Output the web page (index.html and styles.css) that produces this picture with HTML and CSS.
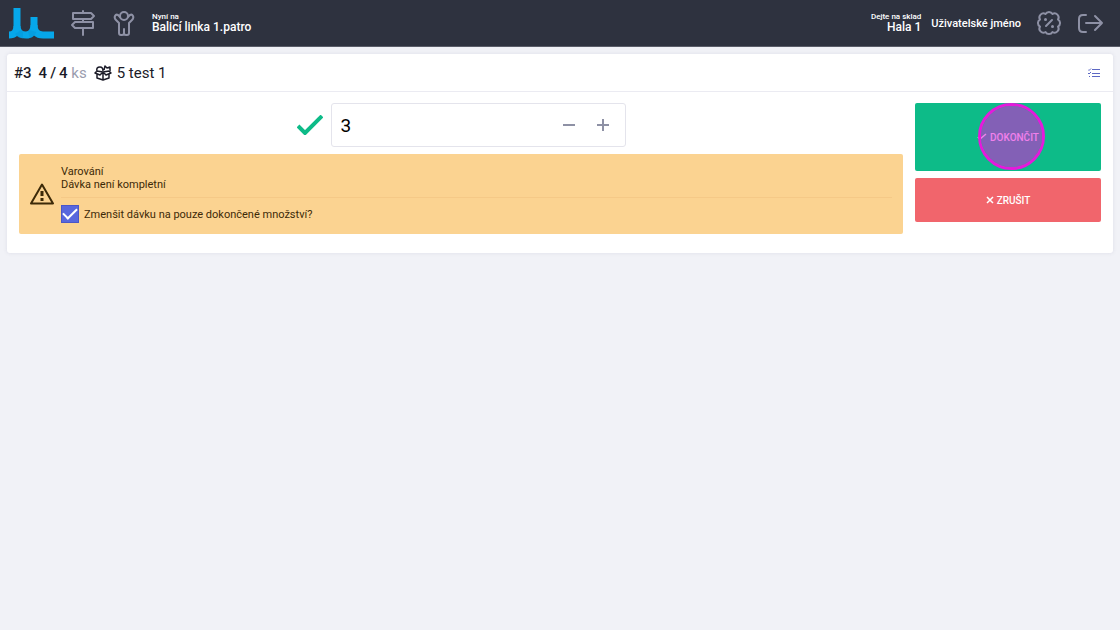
FILE: index.html
```html
<!DOCTYPE html>
<html lang="cs">
<head>
  <meta charset="utf-8">
  <title>Balicí linka 1.patro</title>
  <link rel="stylesheet" href="styles.css">
</head>
<body>
  <header class="topbar">
    <a class="logo" href="#" aria-label="Domů">
      <svg width="46" height="32" viewBox="0 0 46 32">
        <path d="M0 28q8 0 8-9"/>
        <path d="M8 1v18q0 9 9 9 7 0 8-9V10"/>
        <path d="M25 18q0 10 9 10h11"/>
        <path class="shade" d="M9 25q2 3 5 3M20 28q3-1 4-4"/>
      </svg>
    </a>
    <a class="nav-icon" href="#" aria-label="Pracoviště">
      <svg width="26" height="26" viewBox="0 0 26 26">
        <path d="M13 1v2M13 9v3M13 18v7M3 3h18l3 3-3 3H3zM23 12H5l-3 3 3 3h18z"/>
      </svg>
    </a>
    <a class="nav-icon" href="#" aria-label="Pracovník">
      <svg width="26" height="26" viewBox="0 0 26 26">
        <circle cx="13" cy="6" r="4"/>
        <path d="M9 7L7 5Q5 4 4 6 3 8 5 10l3 3v10q0 2 2 2h1q2 0 2-2v-4 4q0 2 2 2h1q2 0 2-2V13l3-3q2-2 1-4-1-2-3-1l-2 2"/>
      </svg>
    </a>
    <div class="place">
      <small>Nyní na</small>
      <span>Balicí linka 1.patro</span>
    </div>
    <div class="account">
      <div class="place">
        <small>Dejte na sklad</small>
        <span>Hala 1</span>
      </div>
      <span>Uživatelské jméno</span>
    </div>
    <a class="nav-icon" href="#" aria-label="Sleva">
      <svg width="26" height="26" viewBox="0 0 26 26">
        <path d="M9.500 4a4 4 0 0 1 7 0 4 4 0 0 1 5.500 5.500 4 4 0 0 1 0 7 4 4 0 0 1-5.500 5.500 4 4 0 0 1-7 0 4 4 0 0 1-5.500-5.500 4 4 0 0 1 0-7 4 4 0 0 1 5.500-5.500zM10 16l6-6"/>
        <circle class="dot" cx="9.500" cy="9.500" r="1.500"/>
        <circle class="dot" cx="16.500" cy="16.500" r="1.500"/>
      </svg>
    </a>
    <a class="nav-icon" href="#" aria-label="Odhlásit">
      <svg width="28" height="26" viewBox="0 0 28 26">
        <path d="M9 5H6q-4 0-4 4v9q0 4 4 4h3M9 13h16M18 6l7 7-7 7"/>
      </svg>
    </a>
  </header>

  <main class="card">
    <div class="card-header">
      <h1>
        <b>#3</b>
        <b>4&thinsp;/&thinsp;4 <span class="unit">ks</span></b>
        <span class="product">
          <svg width="18" height="16" viewBox="0 0 18 16">
            <path d="M3 9v4l6 2 6-2V9M9 7v8M3 6L1 8l5 2 3-3 3 3 5-2-2-2M3 6l6 1 6-1M3 6q-1-4 3-4 3 0 3 4M10 5l1-4 2 2 3-1v4"/>
          </svg>
          5 test 1
        </span>
      </h1>
      <a class="tasks" href="#" aria-label="Seznam úkolů">
        <svg width="12" height="10" viewBox="0 0 12 10">
          <path d="M4 1.500h8M4 5.500h8M4 8.500h8M0 1.500l1 1 2-2M0 5l1 1 2-2M1 8.500h1"/>
        </svg>
      </a>
    </div>

    <form class="card-body">
      <div class="content">
        <div class="amount-row">
          <svg class="ok" width="26" height="20" viewBox="0 0 26 20">
            <path d="M1 11l7 7L25 1"/>
          </svg>
          <div class="amount">
            <input type="text" value="3" aria-label="Množství">
            <button type="button" aria-label="Ubrat">
              <svg width="12" height="12" viewBox="0 0 12 12"><path d="M0 6h12"/></svg>
            </button>
            <button type="button" aria-label="Přidat">
              <svg width="12" height="12" viewBox="0 0 12 12"><path d="M0 6h12M6 0v12"/></svg>
            </button>
          </div>
        </div>
        <div class="alert">
          <svg width="24" height="22" viewBox="0 0 24 22">
            <path d="M12 1.500L23 20.500H1z"/>
            <path d="M12 8v5M12 15v3" class="mark"/>
          </svg>
          <div class="alert-text">
            <p>Varování<br>Dávka není kompletní</p>
            <label class="check">
              <input type="checkbox" checked>
              Zmenšit dávku na pouze dokončené množství?
            </label>
          </div>
        </div>
      </div>
      <div class="actions">
        <button type="button" class="btn btn-finish">
          <svg width="10" height="8" viewBox="0 0 10 8"><path d="M1 4l2 2 6-5"/></svg>
          DOKONČIT
          <span class="tap"></span>
        </button>
        <button type="button" class="btn btn-cancel">
          <svg width="8" height="8" viewBox="0 0 8 8"><path d="M1 1l6 6M7 1L1 7"/></svg>
          ZRUŠIT
        </button>
      </div>
    </form>
  </main>
</body>
</html>
```
FILE: styles.css
```css
* {
  box-sizing: border-box;
}
body {
  margin: 0;
  background: #f1f2f7;
  color: #1b1b28;
  font-family: Roboto, "Liberation Sans", sans-serif;
  font-size: 11px;
}
svg {
  flex: none;
  display: block;
  fill: none;
  stroke: currentColor;
  stroke-width: 2;
}
.topbar {
  display: flex;
  align-items: center;
  gap: 15px;
  height: 47px;
  padding: 0 15px 0 9px;
  background: #2e323f;
  border-bottom: 1px solid #5a5d69;
  color: #fff;
  font-weight: 500;
}
.logo svg {
  color: #06a7ea;
  stroke-width: 7;
}
.logo .shade {
  stroke: #0590d4;
  opacity: 0.4;
}
.nav-icon {
  color: #8e91a5;
}
.nav-icon svg {
  stroke-linejoin: round;
  stroke-linecap: round;
}
.nav-icon .dot {
  fill: currentColor;
  stroke: none;
}
.place {
  display: flex;
  flex-direction: column;
  font-size: 12px;
  line-height: 12px;
}
.place small {
  font-size: 8px;
  line-height: 8px;
}
.account {
  display: flex;
  align-items: center;
  gap: 10px;
  margin-left: auto;
  text-align: right;
}
.card {
  margin: 7px;
  background: #fff;
  border-radius: 3px;
  box-shadow: 0 0 4px rgba(80, 80, 120, 0.12);
}
.card-header {
  display: flex;
  align-items: center;
  justify-content: space-between;
  height: 38px;
  padding: 0 13px 0 7px;
  border-bottom: 1px solid #ebebf2;
}
h1 {
  display: flex;
  align-items: center;
  gap: 7px;
  margin: 0;
  font-size: 15px;
  font-weight: 400;
}
h1 b {
  font-weight: 500;
}
.unit {
  color: #9a9cae;
  font-weight: 400;
}
.product {
  display: flex;
  align-items: center;
  gap: 5px;
}
.product svg {
  stroke-width: 1.5;
  stroke-linejoin: round;
}
.tasks {
  color: #5d68c4;
}
.tasks svg {
  stroke-width: 1;
}
.card-body {
  display: grid;
  grid-template-columns: 1fr 186px;
  gap: 12px;
  padding: 11px 12px 19px;
}
.content,
.actions {
  display: flex;
  flex-direction: column;
  gap: 7px;
}
.amount-row {
  display: flex;
  align-items: center;
  justify-content: center;
  gap: 8px;
}
.ok {
  color: #0dbb88;
  stroke-width: 4;
}
.amount {
  display: flex;
  align-items: center;
  width: 295px;
  height: 44px;
  padding-right: 5px;
  border: 1px solid #e4e4ec;
  border-radius: 3px;
}
.amount input {
  flex: 1;
  min-width: 0;
  padding: 0 9px;
  border: 0;
  outline: 0;
  background: none;
  font: 19px Roboto, "Liberation Sans", sans-serif;
}
.amount button {
  display: flex;
  justify-content: center;
  width: 34px;
  padding: 0;
  border: 0;
  background: none;
  color: #8e91a5;
}
.alert {
  display: flex;
  align-items: center;
  gap: 7px;
  padding: 11px;
  background: #fbd391;
  border-radius: 2px;
  color: #3d2a08;
}
.alert svg {
  stroke-linejoin: round;
}
.alert .mark {
  stroke-width: 3;
}
.alert-text {
  flex: 1;
}
.alert p {
  margin: 0 0 7px;
  padding-bottom: 6px;
  border-bottom: 1px solid #f5c987;
  line-height: 13px;
}
.check {
  display: flex;
  align-items: center;
  gap: 5px;
}
.check input {
  appearance: none;
  display: grid;
  place-items: center;
  width: 18px;
  height: 18px;
  margin: 0;
  border: 1px solid #4a56c8;
  background: #5867dd;
}
.check input:checked::after {
  content: "";
  width: 12px;
  height: 6px;
  margin-bottom: 4px;
  border: solid #fff;
  border-width: 0 0 2px 2px;
  transform: rotate(-45deg);
}
.btn {
  position: relative;
  display: flex;
  align-items: center;
  justify-content: center;
  gap: 3px;
  height: 44px;
  padding: 0;
  border: 0;
  border-radius: 2px;
  color: #fff;
  font: 500 10px Roboto, "Liberation Sans", sans-serif;
}
.btn svg {
  stroke-width: 1.5;
}
.btn-finish {
  height: 68px;
  background: #0dbb88;
}
.btn-cancel {
  background: #f1656c;
}
/* touch highlight over the button */
.tap {
  position: absolute;
  top: 0;
  left: 63px;
  width: 67px;
  height: 67px;
  border: 3px solid #e41adb;
  border-radius: 50%;
  background: rgba(229, 22, 221, 0.55);
  background-clip: padding-box;
}
```
